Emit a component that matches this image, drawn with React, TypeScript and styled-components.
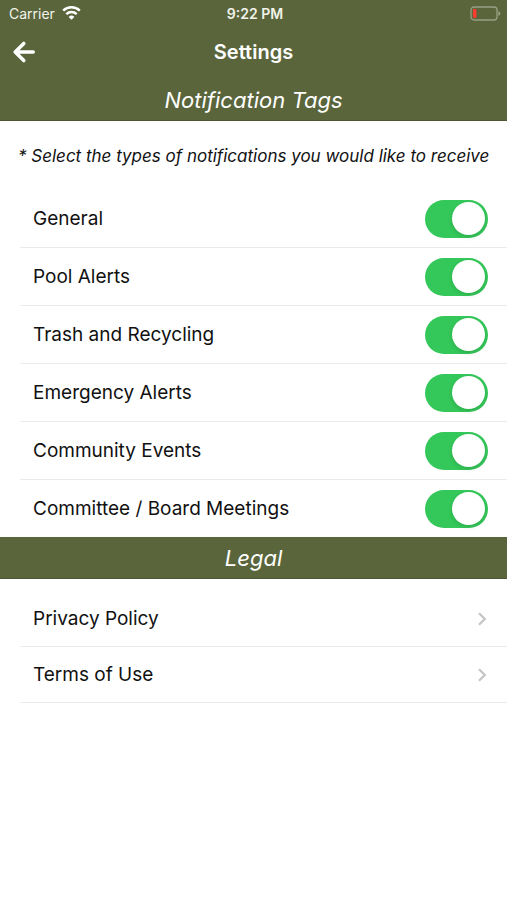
import React, { useState } from "react";
import styled, { createGlobalStyle } from "styled-components";

const GlobalStyle = createGlobalStyle`
  *, *::before, *::after { box-sizing: border-box; }
  body {
    margin: 0;
    background: #fff;
    color: #111;
    font-family: Inter, "Liberation Sans", sans-serif;
  }
`;

const olive = "#5a653c";

const Screen = styled.main`
  min-height: 100vh;
  background: #fff;
`;

const Header = styled.header`
  padding-bottom: 2px;
  background: ${olive};
  color: #fff;
`;

const StatusBar = styled.div`
  display: grid;
  grid-template-columns: 1fr auto 1fr;
  align-items: center;
  height: 27px;
  padding: 0 6px 0 9px;
  font-size: 14px;
  line-height: 20px;
  color: #f1f3ea;
`;

const Carrier = styled.span`
  display: flex;
  align-items: center;
  gap: 7px;
`;

const Time = styled.span`
  font-weight: 600;
`;

const Battery = styled.svg`
  justify-self: end;
`;

const NavBar = styled.div`
  display: grid;
  grid-template-columns: 48px 1fr 48px;
  align-items: center;
  height: 50px;
`;

const BackButton = styled.button`
  display: flex;
  align-items: center;
  height: 44px;
  padding: 0 0 0 12px;
  border: 0;
  background: none;
  color: #fff;
  cursor: pointer;
`;

const Title = styled.h1`
  margin: 0;
  text-align: center;
  font-size: 20px;
  line-height: 24px;
  font-weight: 600;
`;

const SectionTitle = styled.h2`
  margin: 0;
  padding: 7px 0 5px;
  background: ${olive};
  border-bottom: 1px solid #4d5731;
  color: #fff;
  text-align: center;
  font-size: 22px;
  line-height: 29px;
  font-weight: 400;
  font-style: italic;
`;

const Note = styled.p`
  margin: 0;
  padding: 24px 12px 22px 18px;
  font-size: 17px;
  line-height: 23px;
  font-style: italic;
`;

const List = styled.ul<{ $spaced?: boolean }>`
  margin: 0;
  padding: ${(p) => (p.$spaced ? "12px" : "0")} 0 0 20px;
  list-style: none;
`;

const Item = styled.li`
  border-bottom: 1px solid #ebebeb;
`;

const ToggleItem = styled(Item)`
  &:last-child {
    border-bottom: 0;
  }
`;

const ToggleRow = styled.label`
  display: flex;
  align-items: center;
  justify-content: space-between;
  height: 57px;
  padding: 0 19px 0 13px;
  font-size: 19px;
  line-height: 24px;
  cursor: pointer;
`;

const Switch = styled.input`
  appearance: none;
  display: flex;
  align-items: center;
  width: 63px;
  height: 38px;
  margin: 0;
  padding: 0 3px;
  border-radius: 19px;
  background: #e5e5ea;
  cursor: pointer;

  &::before {
    content: "";
    width: 33px;
    height: 33px;
    border-radius: 50%;
    background: #fff;
    box-shadow: 0 2px 4px rgba(0, 0, 0, 0.12);
  }

  &:checked {
    justify-content: flex-end;
    background: #34c759;
  }
`;

const LinkRow = styled.a`
  display: flex;
  align-items: center;
  justify-content: space-between;
  height: 55px;
  padding: 0 20px 0 13px;
  font-size: 19px;
  line-height: 24px;
  color: inherit;
  text-decoration: none;
`;

const tags = [
  "General",
  "Pool Alerts",
  "Trash and Recycling",
  "Emergency Alerts",
  "Community Events",
  "Committee / Board Meetings",
];

const legal = [
  { label: "Privacy Policy", href: "#privacy" },
  { label: "Terms of Use", href: "#terms" },
];

function WifiIcon() {
  return (
    <svg width="19" height="15" viewBox="0 0 19 15" fill="none" stroke="#fff" aria-hidden="true">
      <path d="M1.2 4.7a11.9 11.9 0 0 1 16.6 0" strokeWidth="2.5" />
      <path d="M4.3 8.1a7.5 7.5 0 0 1 10.4 0" strokeWidth="2.3" />
      <path d="M9.5 13.8 6.6 10.9a4.1 4.1 0 0 1 5.8 0Z" fill="#fff" stroke="none" />
    </svg>
  );
}

function BatteryIcon() {
  return (
    <Battery width="31" height="15" viewBox="0 0 31 15" role="img" aria-label="Battery low">
      <rect x="1" y="1" width="26" height="13" rx="3" fill="none" stroke="#98a083" strokeWidth="1.3" />
      <path d="M28.3 5.2c1.3.4 2 1.2 2 2.3s-.7 1.9-2 2.3Z" fill="#98a083" />
      <rect x="3" y="3" width="3.4" height="9" rx="1" fill="#ff3b30" />
    </Battery>
  );
}

function BackIcon() {
  return (
    <svg
      width="24"
      height="24"
      viewBox="0 0 24 24"
      fill="none"
      stroke="currentColor"
      strokeWidth="3.6"
      strokeLinecap="round"
      strokeLinejoin="round"
      aria-hidden="true"
    >
      <path d="M11.8 3.5 3.2 12l8.6 8.5M3.6 12h17.6" />
    </svg>
  );
}

function ChevronIcon() {
  return (
    <svg width="10" height="14" viewBox="0 0 10 14" fill="none" stroke="#c4c4c7" strokeWidth="2.2" aria-hidden="true">
      <path d="M2 1.2 7.8 7 2 12.8" />
    </svg>
  );
}

export default function App() {
  const [enabled, setEnabled] = useState<Record<string, boolean>>(
    Object.fromEntries(tags.map((tag) => [tag, true]))
  );

  return (
    <>
      <GlobalStyle />
      <Screen>
        <Header>
          <StatusBar>
            <Carrier>
              Carrier <WifiIcon />
            </Carrier>
            <Time>9:22 PM</Time>
            <BatteryIcon />
          </StatusBar>
          <NavBar>
            <BackButton type="button" aria-label="Back">
              <BackIcon />
            </BackButton>
            <Title>Settings</Title>
          </NavBar>
        </Header>

        <section>
          <SectionTitle>Notification Tags</SectionTitle>
          <Note>* Select the types of notifications you would like to receive</Note>
          <List>
            {tags.map((tag) => (
              <ToggleItem key={tag}>
                <ToggleRow>
                  {tag}
                  <Switch
                    type="checkbox"
                    role="switch"
                    checked={enabled[tag]}
                    onChange={() => setEnabled({ ...enabled, [tag]: !enabled[tag] })}
                  />
                </ToggleRow>
              </ToggleItem>
            ))}
          </List>
        </section>

        <section>
          <SectionTitle>Legal</SectionTitle>
          <List $spaced>
            {legal.map((item) => (
              <Item key={item.href}>
                <LinkRow href={item.href}>
                  {item.label}
                  <ChevronIcon />
                </LinkRow>
              </Item>
            ))}
          </List>
        </section>
      </Screen>
    </>
  );
}
